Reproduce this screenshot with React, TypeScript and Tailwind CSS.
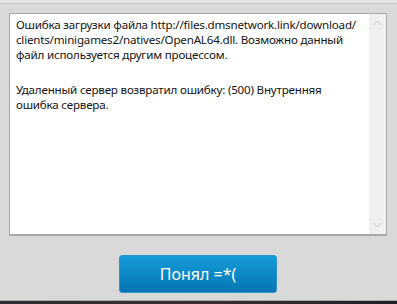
export default function App() {
  return (
    <div className="w-[397px] h-[304px] bg-[#d9d9d9] flex flex-col overflow-hidden" style={{ fontFamily: '"Noto Sans", "Open Sans", sans-serif' }}>
      <div className="h-[4px] bg-[#e4e4e4] border-b border-[#c4c4c4]" />
      <div className="ml-[9px] mt-[9px] w-[378px] h-[223px] bg-white border border-[#a8a8a8] border-b-2 flex">
        <div className="flex-1 pl-[6px] pt-[3px] text-[11.6px] leading-[15px] tracking-[-0.2px] whitespace-nowrap text-[#141414]">
          <p>
            Ошибка загрузки файла http://files.dmsnetwork.link/download/
            <br />
            clients/minigames2/natives/OpenAL64.dll. Возможно данный
            <br />
            файл используется другим процессом.
          </p>
          <p className="mt-[20px]">
            Удаленный сервер возвратил ошибку: (500) Внутренняя
            <br />
            ошибка сервера.
          </p>
        </div>
        <div className="w-[17px] bg-[#f0f0f0] flex flex-col items-center justify-between py-[6px]">
          <svg width="9" height="6" viewBox="0 0 9 6" fill="none" stroke="#c2c2c2" strokeWidth="1">
            <path d="M0.5 5 L4.5 1 L8.5 5" />
          </svg>
          <svg width="9" height="6" viewBox="0 0 9 6" fill="none" stroke="#c2c2c2" strokeWidth="1">
            <path d="M0.5 1 L4.5 5 L8.5 1" />
          </svg>
        </div>
      </div>
      <button className="self-center ml-[-1px] mt-[19px] w-[158px] h-[38px] rounded-[3px] border border-[#2d93cb] bg-gradient-to-b from-[#169cdb] to-[#0575b1] text-white text-[16px]">
        Понял =*(
      </button>
      <div className="flex-1" />
      <div className="h-[1px] bg-[#a9a9a9]" />
      <div className="h-[3px] bg-gradient-to-r from-[#2b2d30] via-[#3a2f33] to-[#1f2125]" />
    </div>
  );
}
